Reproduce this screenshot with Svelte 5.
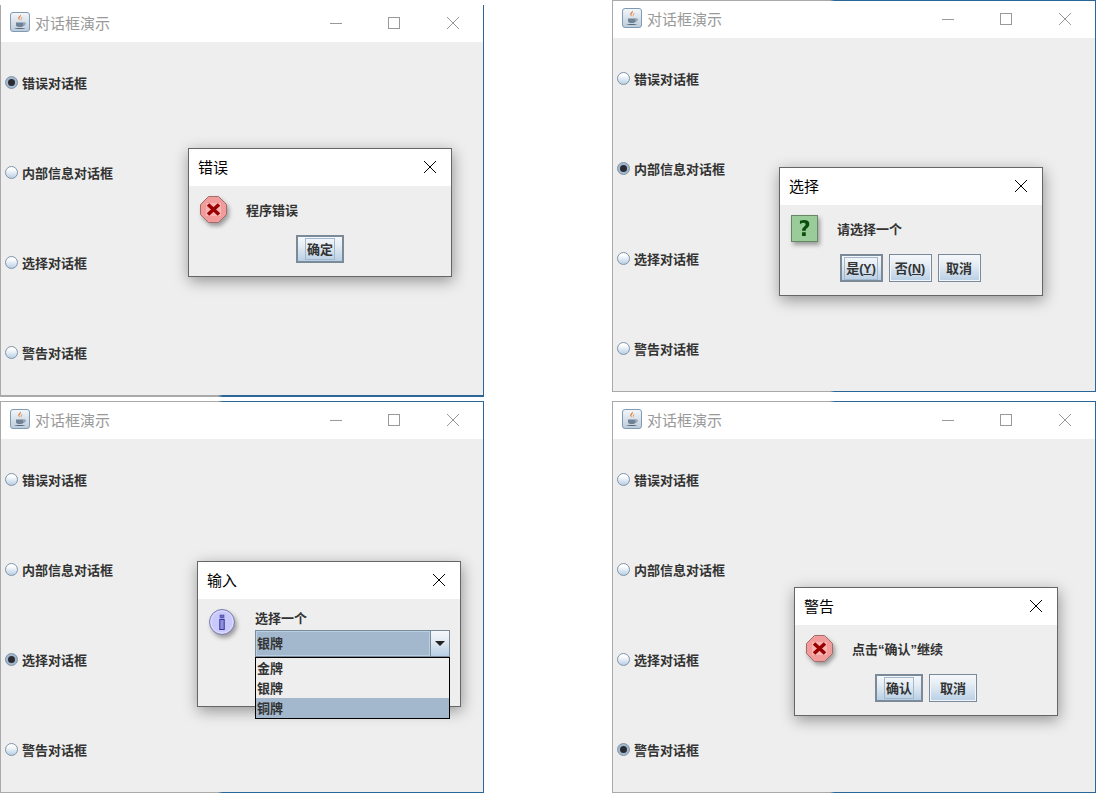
<script>
  const options = ['错误对话框', '内部信息对话框', '选择对话框', '警告对话框'];
  const windows = [
    { id: 'w1', selected: 0, dialog: 'd1', title: '错误', icon: 'error', message: '程序错误',
      buttons: [{ label: '确定', focus: true }] },
    { id: 'w2', selected: 1, dialog: 'd2', title: '选择', icon: 'question', message: '请选择一个',
      buttons: [{ label: '是', key: 'Y', focus: true }, { label: '否', key: 'N' }, { label: '取消' }] },
    { id: 'w3', selected: 2, dialog: 'd3', title: '输入', icon: 'info', message: '选择一个', combo: true, buttons: [] },
    { id: 'w4', selected: 3, dialog: 'd4', title: '警告', icon: 'error', message: '点击“确认”继续',
      buttons: [{ label: '确认', focus: true }, { label: '取消' }] }
  ];
  const items = ['金牌', '银牌', '铜牌'];
</script>

{#snippet javaIcon()}
  <svg class="java" width="20" height="20" viewBox="0 0 20 20">
    <defs>
      <linearGradient id="jg" x1="0" y1="0" x2="0" y2="1">
        <stop offset="0" stop-color="#f4f7fa" />
        <stop offset="1" stop-color="#bccbda" />
      </linearGradient>
    </defs>
    <rect x="0.5" y="0.5" width="19" height="19" rx="2.5" fill="url(#jg)" stroke="#7f9ab3" />
    <path d="M10.5 2.5c1.5 2-2 3-1 5 .4.8 1 1.2 1 1.2-1.800-.7-2.800-2-2-3.500.7-1.200 2-1.500 2-2.700zM12.500 5c0 1.300-1.800 1.800-1 3.700-1.200-1-.8-2.800 1-3.700z" fill="#e2762a" />
    <path d="M6 10.500h7.500v2.500c0 1.400-1.200 2-3.700 2S6 14.400 6 13z" fill="#6f8296" />
    <path d="M13.500 11h1.200c1 0 1 2-1.500 2.300" fill="none" stroke="#6f8296" />
    <path d="M4.500 16h10.500c-1 1.300-9.500 1.300-10.500 0z" fill="#55697e" />
  </svg>
{/snippet}

{#snippet dialogIcon(kind)}
  <svg class="icon" width="27" height="27" viewBox="0 0 27 27">
    {#if kind === 'error'}
      <path d="M8.500 .5h10l8 8v10l-8 8h-10l-8-8v-10z" fill="#f29b9b" stroke="#a06c6c" />
      <rect x="6" y="7" width="15" height="13" fill="#f6b4b4" />
      <path d="M8 8.500l11 10M19 8.500l-11 10" stroke="#9b0000" stroke-width="3.600" stroke-linecap="butt" />
    {:else if kind === 'question'}
      <rect x=".5" y=".5" width="26" height="26" fill="#99cc99" stroke="#668866" />
      <text x="13.500" y="21" text-anchor="middle" class="qmark">?</text>
    {:else}
      <circle cx="13" cy="13" r="12.500" fill="#c9c9fb" stroke="#7d7db0" />
      <circle cx="13" cy="13" r="11" fill="none" stroke="#dedeff" />
      <rect x="11" y="6" width="4" height="3" fill="#6a6ac0" stroke="#4a4aa0" stroke-width=".6" />
      <rect x="10.800" y="10.500" width="4.400" height="10" fill="#8f8fdc" stroke="#333399" />
    {/if}
  </svg>
{/snippet}

<main class="desktop">
  {#each windows as win}
    <section class="window {win.id}">
      <header class="titlebar">
        {@render javaIcon()}
        <span class="wintitle">对话框演示</span>
        <div class="controls">
          <span class="ctl"><svg width="14" height="14" viewBox="0 0 14 14"><path d="M1 7.500h12" stroke="#999" /></svg></span>
          <span class="ctl"><svg width="14" height="14" viewBox="0 0 14 14"><rect x="1.500" y="1.500" width="11" height="11" fill="none" stroke="#999" /></svg></span>
          <span class="ctl"><svg width="14" height="14" viewBox="0 0 14 14"><path d="M1 1l12 12M13 1L1 13" stroke="#999" /></svg></span>
        </div>
      </header>
      <div class="content">
        {#each options as opt, i}
          <label class="radio-row">
            <span class="radio" class:on={i === win.selected}></span>
            <span>{opt}</span>
          </label>
        {/each}
      </div>

      <div class="dialog {win.dialog}">
        <header class="dlgbar">
          <span class="dlgtitle">{win.title}</span>
          <svg class="dlgclose" width="14" height="14" viewBox="0 0 14 14"><path d="M1 1l12 12M13 1L1 13" stroke="#000" /></svg>
        </header>
        <div class="dlgbody">
          <div class="dlgmain">
            {@render dialogIcon(win.icon)}
            {#if win.combo}
              <div class="form">
                <div class="prompt">{win.message}</div>
                <div class="combo">
                  <div class="combo-value"><span>银牌</span></div>
                  <div class="combo-arrow"><i></i></div>
                  <ul class="popup">
                    {#each items as item, i}
                      <li class:sel={i === 2}>{item}</li>
                    {/each}
                  </ul>
                </div>
              </div>
            {:else}
              <div class="message">{win.message}</div>
            {/if}
          </div>
          {#if win.buttons.length}
            <div class="buttons">
              {#each win.buttons as b}
                <div class="btn" class:focus={b.focus}>
                  <span class="cap">{b.label}{#if b.key}<span class="mn">(<u>{b.key}</u>)</span>{/if}</span>
                </div>
              {/each}
            </div>
          {/if}
        </div>
      </div>
    </section>
  {/each}
</main>

<style>
  :global(body) { margin: 0; background: #fff; }
  .desktop {
    position: relative;
    width: 1096px;
    height: 793px;
    overflow: hidden;
    font-family: "Noto Sans CJK SC", sans-serif;
  }
  .window {
    position: absolute;
    width: 484px;
    height: 392px;
    box-sizing: border-box;
    background: #eeeeee;
    border: 1px solid #aaa;
    border-image: linear-gradient(to right, #a9a9a9 45%, #2b6698 46%) 1;
    display: flex;
    flex-direction: column;
  }
  .w1 { left: 0; top: 5px; border-top-width: 0; border-bottom-width: 2px; }
  .w2 { left: 612px; top: 0; }
  .w3 { left: 0; top: 401px; }
  .w4 { left: 612px; top: 401px; }

  .titlebar {
    height: 37px;
    flex: none;
    background: #fff;
    display: flex;
    align-items: center;
    padding-left: 9px;
  }
  .java { flex: none; margin-top: -3px; }
  .wintitle {
    margin-left: 5px;
    margin-top: -2px;
    font-size: 15px;
    line-height: 20px;
    color: #999;
  }
  .controls { margin-left: auto; margin-right: 1px; margin-top: -2px; display: flex; }
  .ctl { width: 58.5px; height: 20px; display: flex; align-items: center; justify-content: center; }

  .content {
    display: grid;
    grid-auto-rows: 82px;
    row-gap: 8px;
    margin-top: -1px;
  }
  .radio-row {
    display: flex;
    align-items: center;
    padding-left: 4px;
    gap: 4px;
    font-size: 13px;
    font-weight: 700;
    color: #333;
  }
  .radio {
    width: 13px;
    height: 13px;
    box-sizing: border-box;
    border-radius: 50%;
    border: 1px solid #8094a8;
    background: linear-gradient(#ffffff 20%, #b8cfe5);
    position: relative;
  }
  .radio.on { background: #a3b8cc; }
  .radio.on::after {
    content: "";
    position: absolute;
    left: 2px;
    top: 2px;
    width: 7px;
    height: 7px;
    border-radius: 50%;
    background: #2b2b33;
  }

  .dialog {
    position: absolute;
    width: 264px;
    height: 129px;
    box-sizing: border-box;
    border: 1px solid #666;
    background: #eeeeee;
    box-shadow: 1px 4px 14px rgba(0, 0, 0, 0.38);
    display: flex;
    flex-direction: column;
  }
  .d1 { left: 187px; top: 143px; }
  .d2 { left: 166px; top: 166px; }
  .d3 { left: 196px; top: 159px; height: 146px; }
  .d4 { left: 181px; top: 185px; }

  .dlgbar {
    height: 37px;
    flex: none;
    background: #fff;
    display: flex;
    align-items: center;
    justify-content: space-between;
    padding: 0 14px 0 9px;
    font-size: 15px;
    color: #000;
  }
  .dlgtitle { margin-top: -2px; }
  .dlgclose { margin-top: -1px; }
  .dlgbody { padding: 10px 0 0 11px; }
  .dlgmain { display: flex; }
  .icon { flex: none; margin-right: 19px; overflow: visible; filter: drop-shadow(2px 3px 2px rgba(0, 0, 0, 0.35)); }
  .qmark { font-family: "DejaVu Sans", sans-serif; font-weight: 700; font-size: 21px; fill: #0b4d0b; }
  .message {
    height: 27px;
    line-height: 29px;
    font-family: "Liberation Sans", "Noto Sans CJK SC", sans-serif;
    font-size: 13px;
    font-weight: 700;
    color: #333;
  }

  .buttons {
    display: flex;
    justify-content: center;
    gap: 6px;
    margin: 12px 0 0 -11px;
  }
  .d2 .buttons { padding-right: 2px; }
  .btn {
    width: 48px;
    height: 28px;
    box-sizing: border-box;
    border: 1px solid #7a8a99;
    box-shadow: inset 0 0 0 1px #f2f6fa;
    background: linear-gradient(#f5f8fb, #e6edf4 35%, #b8cfe5);
    display: flex;
    align-items: center;
    justify-content: center;
    font-size: 13px;
    font-weight: 700;
    color: #333;
  }
  .d2 .btn { width: 43px; }
  .btn.focus { border-width: 2px; box-shadow: none; }
  .cap { white-space: nowrap; line-height: 18px; }
  .btn.focus .cap { outline: 1px solid #a3b8cc; padding: 1px 1px; }
  .mn { font-size: 12.500px; font-family: "Liberation Sans", sans-serif; }

  .form { width: 195px; }
  .prompt { height: 18px; line-height: 17px; font-size: 13px; font-weight: 700; color: #333; }
  .combo {
    position: relative;
    margin-top: 3px;
    height: 27px;
    box-sizing: border-box;
    border: 1px solid #7a8a99;
    display: flex;
  }
  .combo-value {
    flex: 1;
    background: #a3b8cc;
    border: 1px solid #b8cfe5;
    display: flex;
    align-items: center;
    padding: 0 0 2px 0;
    font-size: 13px;
    font-weight: 700;
    color: #333;
  }
  .combo-arrow {
    width: 19px;
    flex: none;
    border-left: 1px solid #7a8a99;
    box-sizing: border-box;
    background: linear-gradient(#f5f8fb, #e6edf4 35%, #b8cfe5);
    display: flex;
    align-items: center;
    justify-content: center;
  }
  .combo-arrow i {
    width: 0;
    height: 0;
    border-left: 5px solid transparent;
    border-right: 5px solid transparent;
    border-top: 5px solid #222;
  }
  .popup {
    position: absolute;
    left: -1px;
    right: -1px;
    top: 26px;
    margin: 0;
    padding: 0;
    list-style: none;
    border: 1px solid #000;
    background: #eeeeee;
  }
  .popup li {
    height: 20px;
    line-height: 20px;
    padding-left: 1px;
    font-size: 13px;
    font-weight: 700;
    color: #333;
  }
  .popup li.sel { background: #a3b8cc; }
</style>
